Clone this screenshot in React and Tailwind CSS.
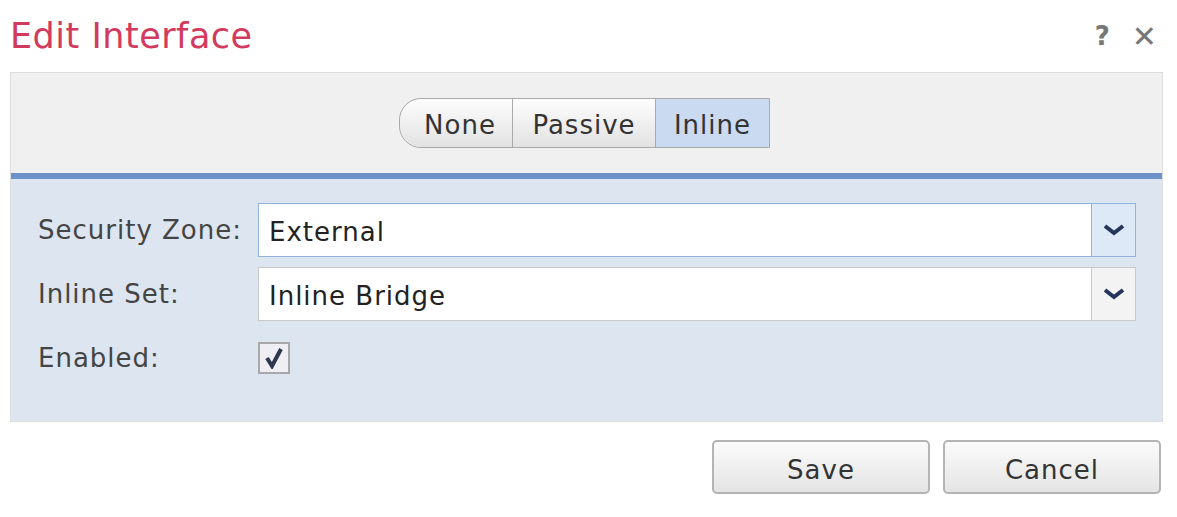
import React from "react";

const font = { fontFamily: '"DejaVu Sans", Verdana, sans-serif' };

function Chevron() {
  return (
    <svg width="22" height="12" viewBox="0 0 22 12">
      <path d="M2 2 L11 9 L20 2" fill="none" stroke="#24345a" strokeWidth="4" strokeLinejoin="miter" />
    </svg>
  );
}

function Select({ value, focused }) {
  return (
    <div
      className={`flex h-[54px] flex-1 border bg-white ${
        focused ? "border-[#8fb4de]" : "border-[#c9c9c9]"
      }`}
    >
      <div className="flex flex-1 items-center pl-[10px] pt-[4px] text-[26px] tracking-[1px] text-[#222]">{value}</div>
      <div
        className={`flex w-[44px] items-center justify-center border-l ${
          focused ? "border-[#8fb4de] bg-[#dde9f6]" : "border-[#c9c9c9] bg-[#f3f3f3]"
        }`}
      >
        <Chevron />
      </div>
    </div>
  );
}

export default function App() {
  return (
    <div className="h-[517px] w-[1177px] bg-white" style={font}>
      {/* Titel */}
      <div className="flex h-[72px] items-center justify-between pl-[10px] pr-[20px]">
        <h1 className="text-[35px] leading-none tracking-[0.5px] text-[#d23a5e]">Edit Interface</h1>
        <div className="flex items-center gap-[22px] text-[26px] font-bold text-[#777]">
          <span>?</span>
          <span className="text-[30px]">✕</span>
        </div>
      </div>

      {/* Panel */}
      <div className="mx-[10px] w-[1153px] border border-[#dedede]">
        <div className="flex h-[100px] items-center justify-center bg-[#f0f0f0] pr-[4px]">
          <div className="flex h-[50px] overflow-hidden rounded-l-[22px] border border-[#a9a9a9] text-[26px] tracking-[1px] text-[#333]">
            <div className="flex w-[112px] items-center justify-center rounded-l-[22px] bg-gradient-to-b from-[#fdfdfd] to-[#e2e2e2] pl-[8px] pt-[4px]">
              None
            </div>
            <div className="flex w-[143px] items-center justify-center border-l border-[#a9a9a9] bg-gradient-to-b from-[#fdfdfd] to-[#e2e2e2] pt-[4px]">
              Passive
            </div>
            <div className="flex w-[114px] items-center justify-center border-l border-[#a9a9a9] bg-[#c9daf1] pt-[4px]">
              Inline
            </div>
          </div>
        </div>
        <div className="h-[6px] bg-[#6b93c9]" />
        <div className="flex flex-col gap-[10px] bg-[#dce5f0] pb-[36px] pl-[27px] pr-[26px] pt-[24px] text-[26px] tracking-[1px] text-[#444]">
          <div className="flex items-center">
            <span className="w-[220px]">Security Zone:</span>
            <Select value="External" focused />
          </div>
          <div className="flex items-center">
            <span className="w-[220px]">Inline Set:</span>
            <Select value="Inline Bridge" />
          </div>
          <div className="flex h-[54px] items-center">
            <span className="w-[220px]">Enabled:</span>
            <div className="flex h-[32px] w-[32px] items-center justify-center border-2 border-[#a8a8a8] bg-[#eeeef4]">
              <svg width="20" height="22" viewBox="0 0 20 22">
                <path d="M3 11 L8 19 L17 2" fill="none" stroke="#2e3650" strokeWidth="4" />
              </svg>
            </div>
          </div>
        </div>
      </div>

      {/* Knöpfe */}
      <div className="flex justify-end gap-[13px] pr-[16px] pt-[18px]">
        {["Save", "Cancel"].map((t) => (
          <button
            key={t}
            className="h-[54px] w-[218px] rounded-[5px] border-2 border-[#b4b4b4] bg-gradient-to-b from-[#fbfbfb] to-[#e4e4e4] pt-[6px] text-[26px] tracking-[1px] text-[#333]"
          >
            {t}
          </button>
        ))}
      </div>
    </div>
  );
}
